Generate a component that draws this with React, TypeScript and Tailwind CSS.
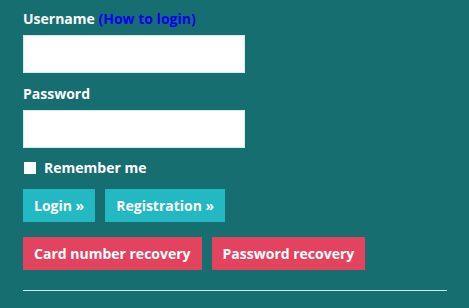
import React, { useState } from "react";

const App = () => {
  const [remember, setRemember] = useState(false);

  return (
    <div className="h-[308px] w-full bg-[#176e70] px-[23px] pt-[9px] font-['Open_Sans',sans-serif] text-white">
      <form className="flex flex-col" onSubmit={(e) => e.preventDefault()}>
        {/* Username */}
        <label htmlFor="username" className="text-[14px] font-bold leading-[19px]">
          Username <a href="#" className="text-[#0000ee]">(How to login)</a>
        </label>
        <input
          id="username"
          type="text"
          className="mt-[7px] h-[38px] w-[222px] border border-[#cfeff1] bg-white px-2 text-black outline-none"
        />

        {/* Password */}
        <label htmlFor="password" className="mt-[11px] text-[14px] font-bold leading-[19px]">
          Password
        </label>
        <input
          id="password"
          type="password"
          className="mt-[7px] h-[38px] w-[222px] border border-[#cfeff1] bg-white px-2 text-black outline-none"
        />

        {/* Remember me */}
        <label className="mt-[10px] flex items-center gap-[8px] text-[14px] font-bold leading-[19px]">
          <input
            type="checkbox"
            checked={remember}
            onChange={(e) => setRemember(e.target.checked)}
            className="ml-[1px] h-[12px] w-[12px] appearance-none rounded-none border border-white bg-white"
          />
          Remember me
        </label>

        {/* Primary actions */}
        <div className="mt-[12px] flex gap-[10px]">
          <button
            type="submit"
            className="h-[33px] bg-[#22b9c3] px-[11px] text-[14px] font-bold"
          >
            Login »
          </button>
          <button
            type="button"
            className="h-[33px] bg-[#22b9c3] px-[11px] text-[14px] font-bold"
          >
            Registration »
          </button>
        </div>

        {/* Recovery actions */}
        <div className="mt-[15px] flex gap-[10px]">
          <button
            type="button"
            className="h-[33px] bg-[#e4435f] px-[11px] text-[14px] font-bold"
          >
            Card number recovery
          </button>
          <button
            type="button"
            className="h-[33px] bg-[#e4435f] px-[11px] text-[14px] font-bold"
          >
            Password recovery
          </button>
        </div>

        <hr className="mt-[20px] w-[424px] border-0 border-t border-[#bdeef0]" />
      </form>
    </div>
  );
};

export default App;
